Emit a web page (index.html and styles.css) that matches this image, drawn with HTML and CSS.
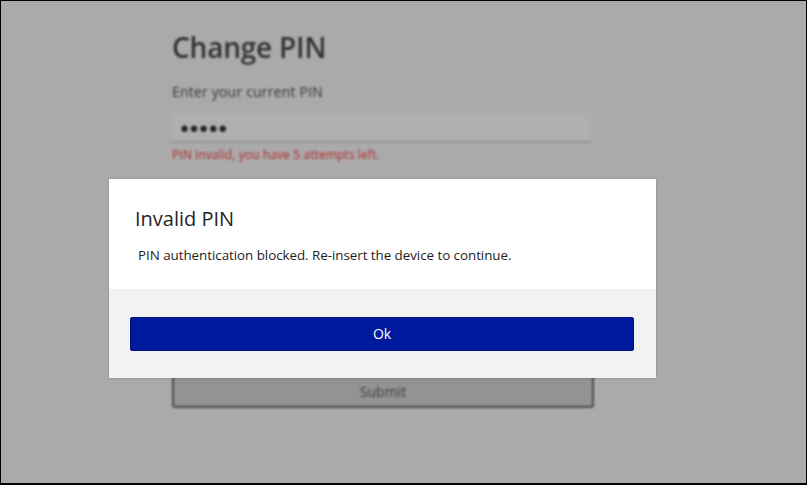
FILE: index.html
```html
<!DOCTYPE html>
<html>
<head>
<meta charset="utf-8">
<link rel="stylesheet" href="styles.css">
</head>
<body>
<div class="frame">
  <div class="page">
    <h1 class="page-title">Change PIN</h1>
    <label class="field-label">Enter your current PIN</label>
    <div class="pin-input">●●●●●</div>
    <div class="field-error">PIN invalid, you have 5 attempts left.</div>
    <div class="submit-btn">Submit</div>
  </div>
  <div class="dialog">
    <div class="dialog-body">
      <h2 class="dialog-title">Invalid PIN</h2>
      <p class="dialog-text">PIN authentication blocked. Re-insert the device to continue.</p>
    </div>
    <div class="dialog-footer">
      <button class="ok-btn">Ok</button>
    </div>
  </div>
</div>
</body>
</html>
```
FILE: styles.css
```css
* { box-sizing: border-box; }
html, body { margin: 0; padding: 0; }
body { width: 807px; height: 485px; overflow: hidden; background: #000; }
.frame {
  position: relative;
  width: 807px;
  height: 485px;
  border: 1px solid #000;
  border-bottom-width: 2px;
  background: #aaaaaa;
  overflow: hidden;
  font-family: "Open Sans", "Noto Sans", sans-serif;
}
.page {
  display: flex;
  flex-direction: column;
  align-items: flex-start;
  padding: 26px 0 0 171px;
  filter: blur(1.1px);
}
.page-title {
  margin: 0;
  font-size: 28px;
  font-weight: 600;
  line-height: 40px;
  color: #333333;
  letter-spacing: -0.2px;
}
.field-label {
  margin-top: 15px;
  font-size: 14px;
  line-height: 19px;
  color: #383838;
  letter-spacing: 0.2px;
}
.pin-input {
  margin-top: 12px;
  width: 419px;
  height: 30px;
  padding-left: 8px;
  background: #afafaf;
  border-bottom: 2px solid #969696;
  font-size: 15px;
  line-height: 28px;
  letter-spacing: 0.5px;
  color: #222222;
}
.field-error {
  margin-top: 4px;
  font-size: 12px;
  line-height: 16px;
  color: #b42a2a;
  letter-spacing: 0.1px;
}
.submit-btn {
  margin-top: 211px;
  width: 422px;
  height: 34px;
  border: 2px solid #4c4c4c;
  border-radius: 3px;
  background: #939393;
  color: #3c3c3c;
  font-size: 14px;
  font-weight: 400;
  text-align: center;
  line-height: 31px;
}
.dialog {
  position: absolute;
  left: 108px;
  top: 178px;
  width: 547px;
  display: flex;
  flex-direction: column;
  background: #ffffff;
  box-shadow: 0 0 2px rgba(0,0,0,0.25);
}
.dialog-body {
  padding: 27px 26px 18px 26px;
  background: #ffffff;
  height: 110px;
}
.dialog-title {
  margin: 0;
  font-size: 20px;
  font-weight: 400;
  line-height: 26px;
  color: #262626;
}
.dialog-text {
  margin: 13px 0 0 3px;
  font-size: 13.4px;
  line-height: 20px;
  color: #1e1e1e;
  letter-spacing: -0.05px;
}
.dialog-footer {
  background: #f2f2f2;
  height: 89px;
  padding: 28px 22px 0 21px;
}
.ok-btn {
  display: block;
  width: 504px;
  height: 34px;
  margin: 0;
  background: #001a9e;
  border: 1px solid #00137a;
  border-radius: 2px;
  color: #ffffff;
  font-family: "Open Sans", "Noto Sans", sans-serif;
  font-size: 14px;
  line-height: 30px;
  padding: 0;
}
```
